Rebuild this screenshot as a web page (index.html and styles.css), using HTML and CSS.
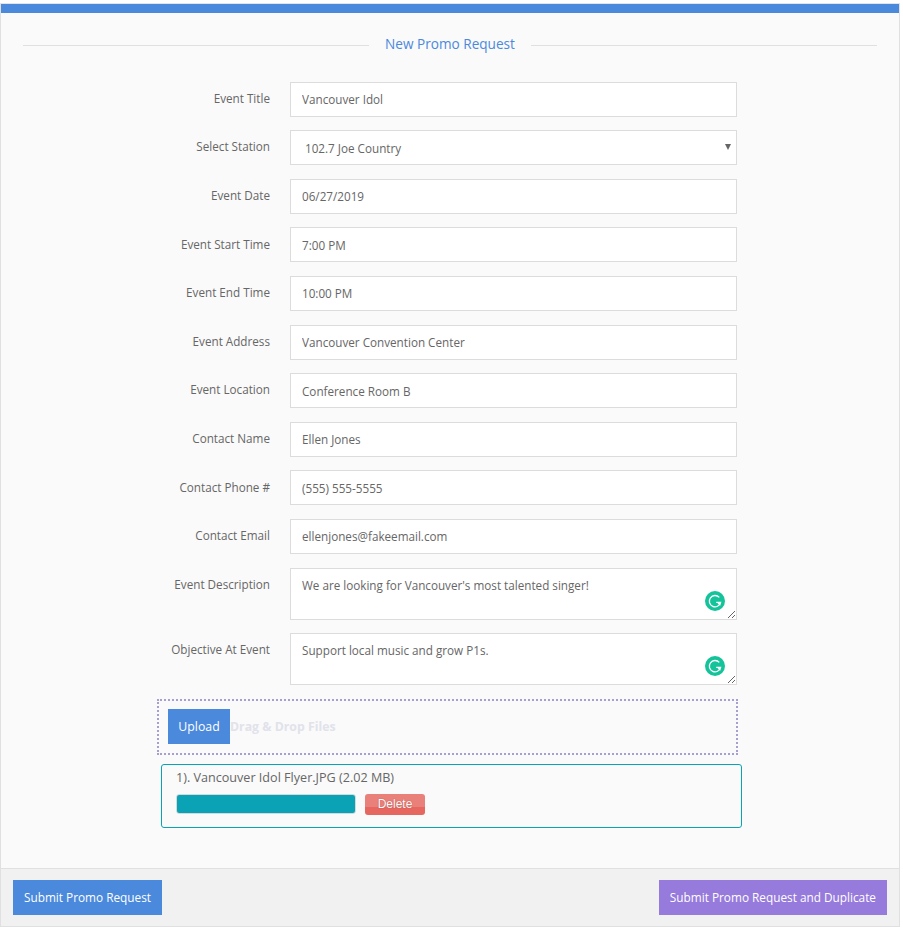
FILE: index.html
```html
<!DOCTYPE html>
<html lang="en">
<head>
<meta charset="UTF-8">
<meta name="viewport" content="width=device-width, initial-scale=1.0">
<title>New Promo Request</title>
<link rel="stylesheet" href="styles.css">
</head>
<body>

<div class="panel">
    <div class="panel-body">
        <div class="divider">
            <span class="divider-line"></span>
            <h2>New Promo Request</h2>
            <span class="divider-line"></span>
        </div>

        <form class="promo-form">
            <div class="form-row">
                <label for="event-title">Event Title</label>
                <input type="text" id="event-title" value="Vancouver Idol">
            </div>
            <div class="form-row">
                <label for="station">Select Station</label>
                <div class="select-wrap">
                    <select id="station">
                        <option>102.7 Joe Country</option>
                    </select>
                </div>
            </div>
            <div class="form-row">
                <label for="event-date">Event Date</label>
                <input type="text" id="event-date" value="06/27/2019">
            </div>
            <div class="form-row">
                <label for="start-time">Event Start Time</label>
                <input type="text" id="start-time" value="7:00 PM">
            </div>
            <div class="form-row">
                <label for="end-time">Event End Time</label>
                <input type="text" id="end-time" value="10:00 PM">
            </div>
            <div class="form-row">
                <label for="address">Event Address</label>
                <input type="text" id="address" value="Vancouver Convention Center">
            </div>
            <div class="form-row">
                <label for="location">Event Location</label>
                <input type="text" id="location" value="Conference Room B">
            </div>
            <div class="form-row">
                <label for="contact-name">Contact Name</label>
                <input type="text" id="contact-name" value="Ellen Jones">
            </div>
            <div class="form-row">
                <label for="contact-phone">Contact Phone #</label>
                <input type="text" id="contact-phone" value="(555) 555-5555">
            </div>
            <div class="form-row">
                <label for="contact-email">Contact Email</label>
                <input type="text" id="contact-email" value="ellenjones@fakeemail.com">
            </div>
            <div class="form-row form-row-text">
                <label for="description">Event Description</label>
                <div class="textarea-wrap">
                    <textarea id="description">We are looking for Vancouver's most talented singer!</textarea>
                    <svg class="grammar-badge" viewBox="0 0 20 20">
                        <circle cx="10" cy="10" r="10" fill="#15c39a"/>
                        <path d="M14.3 6.4A5.7 5.7 0 1 0 15.6 11.4H11.2" fill="none" stroke="#fff" stroke-width="1.3"/>
                        <path d="M11.6 11.2l3.8 3.6v-3.6z" fill="#fff"/>
                    </svg>
                </div>
            </div>
            <div class="form-row form-row-text">
                <label for="objective">Objective At Event</label>
                <div class="textarea-wrap">
                    <textarea id="objective">Support local music and grow P1s.</textarea>
                    <svg class="grammar-badge" viewBox="0 0 20 20">
                        <circle cx="10" cy="10" r="10" fill="#15c39a"/>
                        <path d="M14.3 6.4A5.7 5.7 0 1 0 15.6 11.4H11.2" fill="none" stroke="#fff" stroke-width="1.3"/>
                        <path d="M11.6 11.2l3.8 3.6v-3.6z" fill="#fff"/>
                    </svg>
                </div>
            </div>

            <div class="drop-zone">
                <button type="button" class="btn btn-blue btn-upload">Upload</button>
                <span class="drop-text">Drag &amp; Drop Files</span>
            </div>

            <div class="file-box">
                <p class="file-name">1). Vancouver Idol Flyer.JPG (2.02 MB)</p>
                <div class="file-actions">
                    <div class="progress"><div class="progress-fill"></div></div>
                    <button type="button" class="btn-delete">Delete</button>
                </div>
            </div>
        </form>
    </div>

    <div class="panel-footer">
        <button type="button" class="btn btn-blue">Submit Promo Request</button>
        <button type="button" class="btn btn-purple">Submit Promo Request and Duplicate</button>
    </div>
</div>

</body>
</html>
```

FILE: styles.css
```css
/* Global styles */
body {
    font-family: "Open Sans", sans-serif;
    font-size: 11.7px;
    color: #666;
    margin: 0;
    padding: 3px 0 0;
    background-color: #fff;
}
.panel {
    width: 900px;
    box-sizing: border-box;
    border: 1px solid #e0e0e0;
    border-top: 1px solid #e4e4e4;
    background-color: #fafafa;
}
.panel-body {
    border-top: 9px solid #4a89dc;
    height: 864px;
    box-sizing: border-box;
}

/* Heading with rules either side */
.divider {
    display: flex;
    align-items: center;
    gap: 16px;
    padding: 21px 22px 0;
    height: 22px;
}
.divider h2 {
    margin: 0 0 3px;
    font-size: 13.6px;
    font-weight: 400;
    color: #4a89dc;
}
.divider-line {
    flex: 1;
    height: 1px;
    background-color: #e0e0e0;
}

/* Form rows */
.promo-form {
    padding-top: 25.6px;
}
.form-row {
    display: flex;
    gap: 20px;
    margin-bottom: 13.6px;
}
.form-row-text {
    margin-bottom: 13px;
}
.form-row label {
    width: 269px;
    flex: none;
    box-sizing: border-box;
    padding-top: 8.2px;
    text-align: right;
    line-height: 17px;
}
input, select, textarea {
    display: block;
    width: 447px;
    box-sizing: border-box;
    border: 1px solid #dcdcdc;
    border-radius: 0;
    background-color: #fff;
    font-family: "Open Sans", sans-serif;
    font-size: 11.7px;
    color: #666;
    outline: none;
}
input, select {
    height: 35px;
    padding: 0 11px;
}
select {
    appearance: none;
    padding: 1px 14px 0;
}
textarea {
    height: 52px;
    padding: 8px 11px;
    line-height: 17px;
}
.select-wrap, .textarea-wrap {
    position: relative;
}
.select-wrap::after {
    content: "";
    position: absolute;
    right: 6px;
    top: 14px;
    border-style: solid;
    border-width: 6px 3px 0;
    border-color: #666 transparent transparent;
}
.grammar-badge {
    position: absolute;
    right: 12px;
    bottom: 9px;
    width: 20px;
    height: 20px;
}

/* Upload */
.drop-zone {
    display: flex;
    align-items: center;
    width: 581px;
    height: 56px;
    box-sizing: border-box;
    margin: 14.4px 0 0 156px;
    padding-left: 9px;
    border: 2px dotted #a99fcf;
}
.drop-text {
    font-size: 12.3px;
    font-weight: 700;
    color: #e1e2ea;
}
.file-box {
    width: 581px;
    height: 64px;
    box-sizing: border-box;
    margin: 9px 0 0 160px;
    padding: 4px 14px;
    border: 1px solid #0aa2b5;
    border-radius: 3px;
}
.file-name {
    margin: 0 0 8px;
    font-size: 12.6px;
    line-height: 17px;
}
.file-actions {
    display: flex;
    gap: 9px;
}
.progress {
    width: 180px;
    height: 20px;
    box-sizing: border-box;
    border: 1px solid #d8d8d8;
    border-radius: 3px;
}
.progress-fill {
    height: 100%;
    width: 178px;
    background-color: #0aa2b5;
    border-radius: 2px;
}
.btn-delete {
    width: 60px;
    height: 21px;
    padding: 0;
    border: none;
    border-radius: 3px;
    background: linear-gradient(#e9807a 0, #e9807a 62%, #e5675f 62%, #e5675f 100%);
    font-family: "Liberation Sans", sans-serif;
    font-size: 12px;
    color: #fff;
    text-shadow: 0 0 1px #a83a33;
}

/* Buttons */
.btn {
    height: 35px;
    padding: 0 11px 2px;
    border: none;
    font-family: "Open Sans", sans-serif;
    font-size: 11.8px;
    font-weight: 400;
    color: #fff;
}
.btn-blue {
    background-color: #4a89dc;
}
.btn-purple {
    background-color: #967adc;
}
.btn-upload {
    width: 62px;
    padding: 0;
    font-size: 12.3px;
}
.panel-footer {
    display: flex;
    justify-content: space-between;
    padding: 11px 12px;
    border-top: 1px solid #e0e0e0;
    background-color: #f1f1f1;
}
```
